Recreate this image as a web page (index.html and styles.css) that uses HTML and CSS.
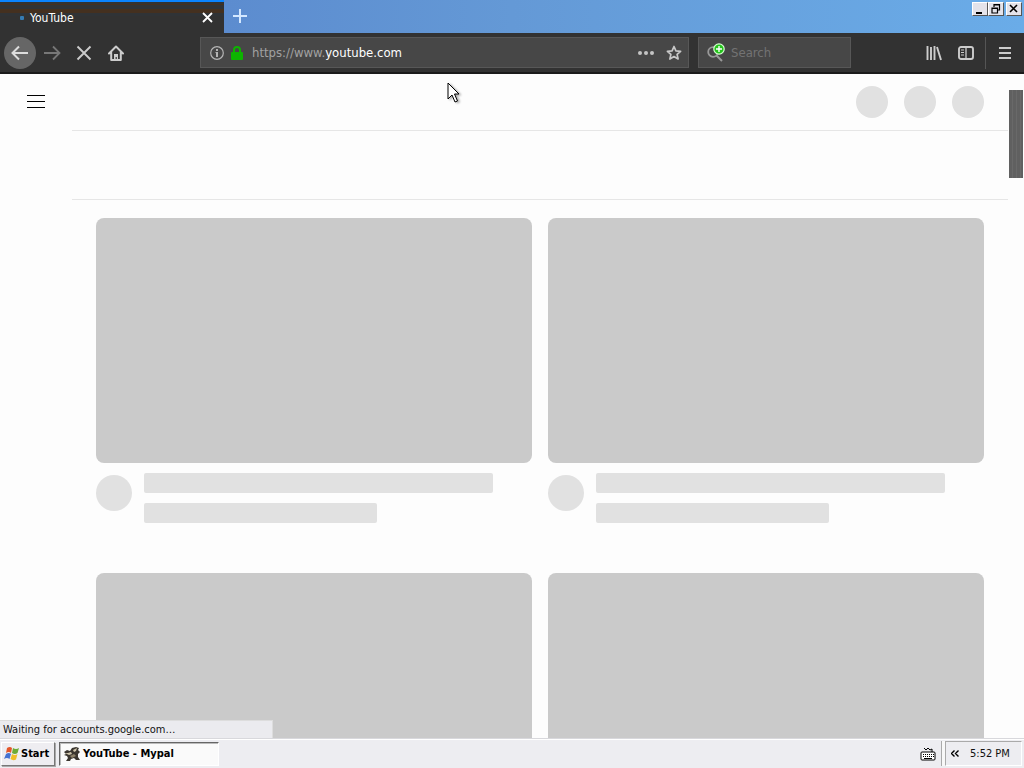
FILE: index.html
```html
<!DOCTYPE html>
<html lang="en">
<head>
<meta charset="utf-8">
<title>YouTube - Mypal</title>
<link rel="stylesheet" href="styles.css">
</head>
<body>
<div class="desktop">
  <header class="tabbar">
    <div class="tab">
      <span class="tab-dot"></span>
      <span class="tab-title">YouTube</span>
      <button class="icon-btn tab-close" aria-label="Close tab"><svg width="11" height="11" viewBox="0 0 11 11"><path d="M1 1l9 9M10 1l-9 9" stroke="#fff" stroke-width="1.8"/></svg></button>
    </div>
    <button class="icon-btn new-tab" aria-label="New tab"><svg width="14" height="14" viewBox="0 0 14 14"><path d="M7 0v14M0 7h14" stroke="#d4e8ff" stroke-width="2"/></svg></button>
    <div class="window-controls">
      <button aria-label="Minimize"><svg width="12" height="12" viewBox="0 0 12 12"><path d="M2 9h6v2H2z"/></svg></button>
      <button aria-label="Restore"><svg width="12" height="12" viewBox="0 0 12 12"><path d="M4 4V1.500h5.500V7H8M4 2h6" fill="none" stroke="#000" stroke-width="1.200"/><path d="M2 5h5.500v5H2zM2 5.500h6" fill="none" stroke="#000" stroke-width="1.200"/></svg></button>
      <button class="win-close" aria-label="Close"><svg width="12" height="12" viewBox="0 0 12 12"><path d="M2 2l7 7M9 2l-7 7" stroke="#000" stroke-width="1.6"/></svg></button>
    </div>
  </header>

  <nav class="toolbar">
    <div class="nav-buttons">
      <button class="icon-btn back" aria-label="Back"><svg width="18" height="16" viewBox="0 0 18 16"><path d="M17 8H2M8 1.500L1.500 8L8 14.500" fill="none" stroke="#ddd" stroke-width="2"/></svg></button>
      <button class="icon-btn" aria-label="Forward"><svg width="18" height="16" viewBox="0 0 18 16"><path d="M1 8h15M10 1.500L16.500 8L10 14.500" fill="none" stroke="#777" stroke-width="1.800"/></svg></button>
      <button class="icon-btn" aria-label="Stop"><svg width="16" height="16" viewBox="0 0 16 16"><path d="M1.500 1.500l13 13M14.500 1.500l-13 13" stroke="#ccc" stroke-width="1.900"/></svg></button>
      <button class="icon-btn" aria-label="Home"><svg width="16" height="16" viewBox="0 0 16 16"><path d="M1 8.500L8 1.500L15 8.500M3.200 7.500V15h9.600V7.500" fill="none" stroke="#ccc" stroke-width="2" stroke-linejoin="round" stroke-linecap="round"/><path d="M6 15V9h4v6H8.800v-3H7.600v3z" fill="#ccc"/></svg></button>
    </div>
    <div class="urlbar">
      <svg width="14" height="14" viewBox="0 0 14 14"><circle cx="7" cy="7" r="6.300" fill="none" stroke="#b5b5b5" stroke-width="1.200"/><path d="M6 3h2v2H6zM5.500 6H8v5H6V7h-.5z" fill="#b5b5b5"/></svg>
      <svg width="14" height="16" viewBox="0 0 14 16"><path d="M4 8V5a3 3 0 0 1 6 0v3" fill="none" stroke="#0db500" stroke-width="2"/><rect x="1" y="7" width="12" height="8" rx="1" fill="#0db500"/></svg>
      <a class="address" href="#"><span>https://www.</span>youtube.com</a>
      <button class="icon-btn small" aria-label="Page actions"><svg width="16" height="4" viewBox="0 0 16 4"><g fill="#c4c4c4"><circle cx="2" cy="2" r="2"/><circle cx="8" cy="2" r="2"/><circle cx="14" cy="2" r="2"/></g></svg></button>
      <button class="icon-btn small" aria-label="Bookmark"><svg width="16" height="16" viewBox="0 0 16 16"><path d="M8 1.500l1.900 4.300 4.700.5-3.500 3.100 1 4.600L8 11.600 3.900 14l1-4.600L1.400 6.300l4.700-.5z" fill="none" stroke="#c8c8c8" stroke-width="1.700" stroke-linejoin="round"/></svg></button>
    </div>
    <div class="searchbar">
      <svg width="20" height="20" viewBox="0 0 20 20"><circle cx="7" cy="9" r="4.800" fill="none" stroke="#999" stroke-width="1.800"/><path d="M10.500 12.500L16 18" stroke="#999" stroke-width="2"/><circle cx="13" cy="6" r="5.200" fill="#25c41c" stroke="#d9ffd4" stroke-width="1.200"/><path d="M13 3v6M10 6h6" stroke="#fff" stroke-width="1.400"/></svg>
      <input type="text" placeholder="Search" aria-label="Search">
    </div>
    <div class="tools">
      <button class="icon-btn" aria-label="Library"><svg width="16" height="16" viewBox="0 0 16 16"><path d="M1.500 1v14M5 2v13M8.500 1v14M11 2l4 13" fill="none" stroke="#ccc" stroke-width="1.900"/></svg></button>
      <button class="icon-btn" aria-label="Sidebars"><svg width="16" height="14" viewBox="0 0 16 14"><rect x="1" y="1" width="14" height="12" rx="2" fill="none" stroke="#ccc" stroke-width="1.900"/><path d="M8 1v12" stroke="#ccc" stroke-width="1.300"/><path d="M3 4h3M3 6.500h3M3 9h3" stroke="#ccc"/></svg></button>
    </div>
    <button class="icon-btn app-menu" aria-label="Menu"><svg width="12" height="12" viewBox="0 0 12 12"><path d="M0 1h12M0 6h12M0 11h12" stroke="#ccc" stroke-width="2"/></svg></button>
  </nav>

  <main class="page">
    <aside class="guide"><button class="icon-btn" aria-label="Guide"><svg width="18" height="14" viewBox="0 0 18 14"><path d="M0 1h18v1H0zM0 7h18v1H0zM0 13h18v1H0z" fill="#000"/></svg></button></aside>
    <div class="feed">
      <div class="masthead"><i class="dot"></i><i class="dot"></i><i class="dot"></i></div>
      <div class="chips"></div>
      <div class="grid">
        <article class="video"><div class="thumb"></div><div class="meta"><i class="avatar"></i><div class="lines"><i class="line"></i><i class="line short"></i></div></div></article>
        <article class="video"><div class="thumb"></div><div class="meta"><i class="avatar"></i><div class="lines"><i class="line"></i><i class="line short"></i></div></div></article>
        <article class="video"><div class="thumb"></div></article>
        <article class="video"><div class="thumb"></div></article>
      </div>
    </div>
    <div class="scroll-track"><div class="scroll-thumb"></div></div>
    <div class="status">Waiting for accounts.google.com…</div>
  </main>

  <footer class="taskbar">
    <button class="start"><svg width="16" height="16" viewBox="0 0 16 16"><path d="M3 2q3-2 5 0L7 7Q5 5 2 7z" fill="#e4572a"/><path d="M9 2q3 2 6 0l-1.500 5Q11 9 8 7z" fill="#6dab35"/><path d="M2 8q3-2 5 0l-1.500 5Q3 11 0 13z" fill="#4573d2"/><path d="M8 8q3 2 5.500 0L12 13.500Q9 15 6.500 13z" fill="#f0be27"/></svg>Start</button>
    <button class="task"><svg width="16" height="16" viewBox="0 0 16 16"><path d="M0 6l3-2 3 1 2-3 4-1 3 1-1 2 2 2-2 2v3l2 3h-4l-2-2-3 1-1 2H2l2-3-1-2-3-1 2-1z" fill="#3b362f"/><path d="M1 7h3l3-1 1 2-3 1zM9 4l4-2-1 3-2 1z" fill="#d0c6ac"/><path d="M6 10l4-2 2 2-4 2z" fill="#8c8068"/></svg>YouTube - Mypal</button>
    <svg class="keyboard" width="16" height="14" viewBox="0 0 16 14"><path d="M4 1l2 2 2-2 2 2 2-1v3" fill="none" stroke="#000"/><rect x="1" y="5" width="14" height="8" rx="1" fill="#fff" stroke="#000"/><path d="M3 7.500h11M3 9.500h11" stroke="#000" stroke-dasharray="1 1"/><path d="M4 11.500h8" stroke="#000"/></svg>
    <div class="tray"><button class="icon-btn expand" aria-label="Show hidden icons"><svg width="8" height="7" viewBox="0 0 8 7"><path d="M3.500 .5l-3 3 3 3M7.500 .5l-3 3 3 3" fill="none" stroke="#000" stroke-width="1.400"/></svg></button><time>5:52 PM</time></div>
  </footer>
  <svg class="cursor" width="14" height="22" viewBox="0 0 14 22"><path d="M1 1v16l4-4 3 7 2.500-1-3-7H12z" fill="#fff" stroke="#000"/></svg>
</div>
</body>
</html>
```
FILE: styles.css
```css
* { box-sizing: border-box; }
body { margin: 0; font-family: "DejaVu Sans Condensed", "Noto Sans", sans-serif; font-size: 11px; color: #111; }
button, input { font: inherit; }
svg { display: block; flex: none; }
.desktop { height: 100vh; display: flex; flex-direction: column; position: relative; overflow: hidden; background: #fdfdfd; }
.icon-btn { border: 0; padding: 0; background: none; width: 32px; height: 32px; display: flex; align-items: center; justify-content: center; flex: none; }
.icon-btn.small { width: 28px; }

.tabbar { height: 33px; flex: none; display: flex; align-items: flex-start; background: linear-gradient(90deg, #5c8ccf 22%, #6499d6 50%, #6aace8); }
.tab { width: 224px; height: 33px; border-top: 2px solid #0a84ff; background: linear-gradient(#333 0 2px, #44301f 2px 3px, #303336 3px 7px, #44301f 7px 11px, #303336 11px 14px, #323232 14px); display: flex; align-items: center; padding: 0 1px 0 20px; color: #fff; }
.tab-dot { width: 4px; height: 4px; border-radius: 1px; background: #357cb4; margin-right: 6px; }
.tab-title { flex: 1; font-size: 12px; }
.window-controls { margin-left: auto; display: flex; padding: 2px 2px 0 0; }
.window-controls button { width: 16px; height: 14px; padding: 0 0 0 1px; border: 1px solid; border-color: #fff #555 #555 #fff; background: #e4e3ea; display: flex; }
.window-controls .win-close { margin-left: 2px; }

.toolbar { height: 41px; flex: none; display: flex; align-items: center; background: #323232; border-bottom: 2px solid #1b1b1b; padding-left: 4px; }
.nav-buttons { display: flex; width: 196px; }
.back { border-radius: 50%; background: #666; }
.urlbar, .searchbar { height: 31px; background: #474747; border: 1px solid #575757; display: flex; align-items: center; }
.urlbar { flex: 1; padding: 0 0 0 9px; gap: 6px; }
.urlbar .small { margin-left: -6px; }
.address { flex: 1; color: #fff; text-decoration: none; font-size: 13px; padding-left: 2px; white-space: nowrap; }
.address span { color: #a2a2a2; }
.searchbar { width: 153px; margin-left: 9px; padding-left: 7px; gap: 5px; }
.searchbar input { width: 100px; min-width: 0; border: 0; background: none; color: #ddd; outline: 0; padding: 0; font-size: 13px; }
.searchbar input::placeholder { color: #737373; opacity: 1; }
.tools { display: flex; margin-left: 67px; }
.app-menu { width: 39px; margin-left: 3px; border-left: 1px solid #555; }

.page { flex: 1; min-height: 0; display: flex; position: relative; overflow: hidden; }
.guide { width: 72px; flex: none; padding: 11px 20px; }
.feed { flex: 1; min-width: 0; }
.masthead { height: 57px; display: flex; justify-content: flex-end; gap: 16px; padding: 12px 24px 0; border-bottom: 1px solid #e6e6e6; }
.dot { width: 32px; height: 32px; border-radius: 50%; background: #e1e1e1; }
.chips { height: 69px; border-bottom: 1px solid #e6e6e6; }
.grid { display: grid; grid-template-columns: 1fr 1fr; gap: 50px 16px; padding: 18px 24px 0; }
.thumb { aspect-ratio: 436 / 245; border-radius: 8px; background: #cacaca; }
.meta { display: flex; gap: 12px; padding-top: 10px; }
.avatar { width: 36px; height: 36px; border-radius: 50%; background: #e1e1e1; margin-top: 2px; flex: none; }
.lines { flex: 1; display: flex; flex-direction: column; gap: 10px; }
.line { width: 90%; height: 20px; border-radius: 2px; background: #e1e1e1; }
.line.short { width: 60%; }
.scroll-track { width: 16px; flex: none; padding: 16px 1px 0; }
.scroll-thumb { height: 88px; background: repeating-linear-gradient(90deg, #606060 0 3px, #696969 3px 4px); }
.status { position: absolute; left: 0; bottom: 0; width: 273px; height: 18px; padding-left: 3px; line-height: 18px; background: #ebebef; border-top: 1px solid #ddd; border-right: 1px solid #ddd; }

.taskbar { height: 30px; flex: none; display: flex; align-items: center; padding: 2px 2px 2px 1px; background: #ededf1; border-top: 1px solid #d8d8dc; box-shadow: inset 0 1px #fff; }
.start, .task { height: 24px; display: flex; align-items: center; padding: 0 3px; gap: 1px; font-weight: bold; color: #000; white-space: nowrap; }
.start { width: 54px; padding: 0 2px; background: #eeedf1; border: 1px solid; border-color: #fff #777 #777 #fff; box-shadow: 1px 1px #aaa; }
.task { width: 160px; margin-left: 4px; gap: 3px; padding-left: 4px; background: #fafafa; border: 1px solid; border-color: #666 #fff #fff #666; box-shadow: inset 1px 1px #bbb; }
.keyboard { margin-left: auto; }
.tray { width: 77px; height: 25px; margin-left: 9px; display: flex; align-items: center; border: 1px solid; border-color: #aaa #fff #fff #aaa; box-shadow: -3px 0 #f8f8f8, -4px 0 #aaa; }
.expand { width: 18px; }
.tray time { padding-left: 6px; }
.cursor { position: absolute; left: 447px; top: 82px; filter: drop-shadow(2px 1px 1px #aaa); }
```
